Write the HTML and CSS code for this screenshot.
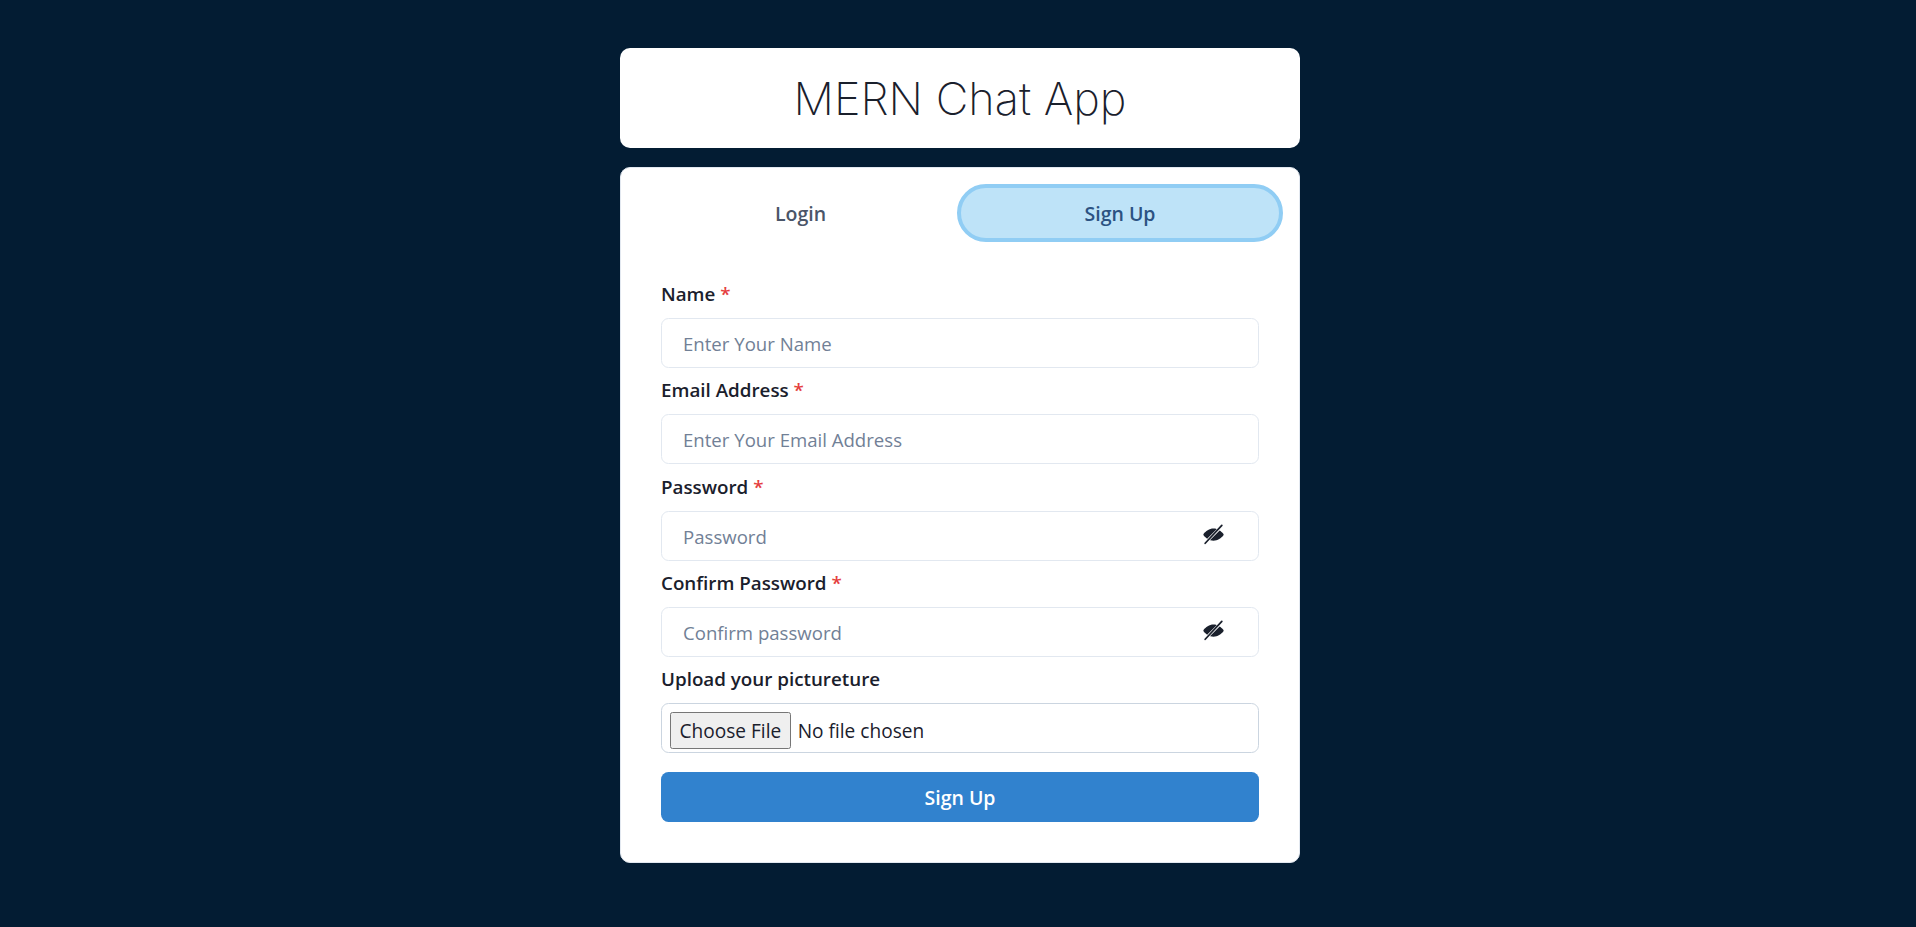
FILE: index.html
```html
<!DOCTYPE html>
<html lang="en">
<head>
  <meta charset="UTF-8" />
  <meta name="viewport" content="width=device-width, initial-scale=1.0" />
  <title>MERN Chat App</title>
  <link rel="stylesheet" href="styles.css">
</head>
<body>
  <div class="container">
    <div class="title-box">
      <h1>MERN Chat App</h1>
    </div>

    <div class="card">
      <div class="tabs">
        <button type="button" class="tab">Login</button>
        <button type="button" class="tab tab-active">Sign Up</button>
      </div>

      <form class="signup-form">
        <div class="field">
          <label for="name">Name <span class="req">*</span></label>
          <input type="text" id="name" placeholder="Enter Your Name" />
        </div>
        <div class="field">
          <label for="email">Email Address <span class="req">*</span></label>
          <input type="email" id="email" placeholder="Enter Your Email Address" />
        </div>
        <div class="field">
          <label for="password">Password <span class="req">*</span></label>
          <div class="input-group">
            <input type="password" id="password" placeholder="Password" />
            <button type="button" class="eye-btn" aria-label="Show password">
              <svg viewBox="0 0 24 24" width="21" height="21"><use href="#eye-off"></use></svg>
            </button>
          </div>
        </div>
        <div class="field">
          <label for="confirm">Confirm Password <span class="req">*</span></label>
          <div class="input-group">
            <input type="password" id="confirm" placeholder="Confirm password" />
            <button type="button" class="eye-btn" aria-label="Show password">
              <svg viewBox="0 0 24 24" width="21" height="21"><use href="#eye-off"></use></svg>
            </button>
          </div>
        </div>
        <div class="field">
          <label for="pic">Upload your pictureture</label>
          <input type="file" id="pic" class="file-input" />
        </div>
        <button type="submit" class="submit-btn">Sign Up</button>
      </form>
    </div>
  </div>

  <svg class="icon-defs" width="0" height="0" aria-hidden="true">
    <symbol id="eye-off" viewBox="0 0 24 24">
      <path fill="currentColor" d="M12 5C7.200 5 3 8.200 .8 11a1.600 1.600 0 0 0 0 2C3 15.800 7.200 19 12 19s9-3.200 11.200-6a1.600 1.600 0 0 0 0-2C21 8.200 16.800 5 12 5Z"/>
      <path fill="none" stroke="#fff" stroke-width="3.600" d="M18 6 6 18"/>
      <path fill="none" stroke="currentColor" stroke-width="2" stroke-linecap="round" d="M21.500 1.500 2.500 22"/>
    </symbol>
  </svg>
</body>
</html>
```

FILE: styles.css
```css
* {
  box-sizing: border-box;
}

body {
  margin: 0;
  min-height: 927px;
  background-color: #031c33;
  font-family: 'Open Sans', 'Noto Sans', sans-serif;
  color: #1a202c;
}

.container {
  width: 680px;
  margin-left: 620px;
  padding-top: 48px;
  display: flex;
  flex-direction: column;
  gap: 19px;
}

.title-box {
  background-color: white;
  border-radius: 10px;
  height: 100px;
  display: flex;
  justify-content: center;
  align-items: center;
}

h1 {
  margin: 0;
  font-family: 'Inter', sans-serif;
  font-weight: 200;
  font-size: 45px;
  color: #1a202c;
}

.card {
  background-color: white;
  border: 1px solid #e2e8f0;
  border-radius: 10px;
  padding: 16px 16px 40px 23px;
}

.tabs {
  display: flex;
  margin-bottom: 16px;
}

.tab {
  flex: 1;
  height: 58px;
  border: 4px solid transparent;
  border-radius: 999px;
  background: none;
  font: 560 19.500px 'Open Sans', sans-serif;
  color: #4a5568;
}

.tab-active {
  flex: none;
  width: 326px;
  background-color: #bee3f8;
  border-color: #90cdf4;
  color: #2c5282;
}

.signup-form {
  display: flex;
  flex-direction: column;
  gap: 6.25px;
  padding: 20px 24px 0 17px;
}

label {
  display: block;
  padding-top: 1px;
  margin-bottom: 9px;
  font-size: 18.8px;
  font-weight: 560;
  line-height: 30px;
}

.req {
  color: #e53e3e;
}

input {
  width: 100%;
  height: 50px;
  padding: 1px 20px 0 21px;
  border: 1.25px solid #e2e8f0;
  border-radius: 7.5px;
  background: white;
  font-family: inherit;
  font-size: 18.6px;
  color: #1a202c;
}

input::placeholder {
  color: #718096;
}

.input-group {
  position: relative;
}

.eye-btn {
  position: absolute;
  top: 0;
  right: 16px;
  width: 60px;
  height: 48px;
  display: flex;
  justify-content: center;
  align-items: center;
  border: none;
  background: none;
  color: #1a202c;
  padding: 0;
}

.file-input {
  padding: 8px 0 0 8px;
  border-color: #cbd5e0;
  font-size: 19.100px;
}

.file-input::file-selector-button {
  font-family: inherit;
  font-size: 19.100px;
  color: #1a202c;
  height: 37px;
  padding: 0 7.5px;
  margin-right: 7px;
}

.submit-btn {
  height: 50px;
  margin-top: 13px;
  border: none;
  border-radius: 7.5px;
  background-color: #3182ce;
  color: white;
  font: 560 19.500px 'Open Sans', sans-serif;
}

.icon-defs {
  position: absolute;
}
```
